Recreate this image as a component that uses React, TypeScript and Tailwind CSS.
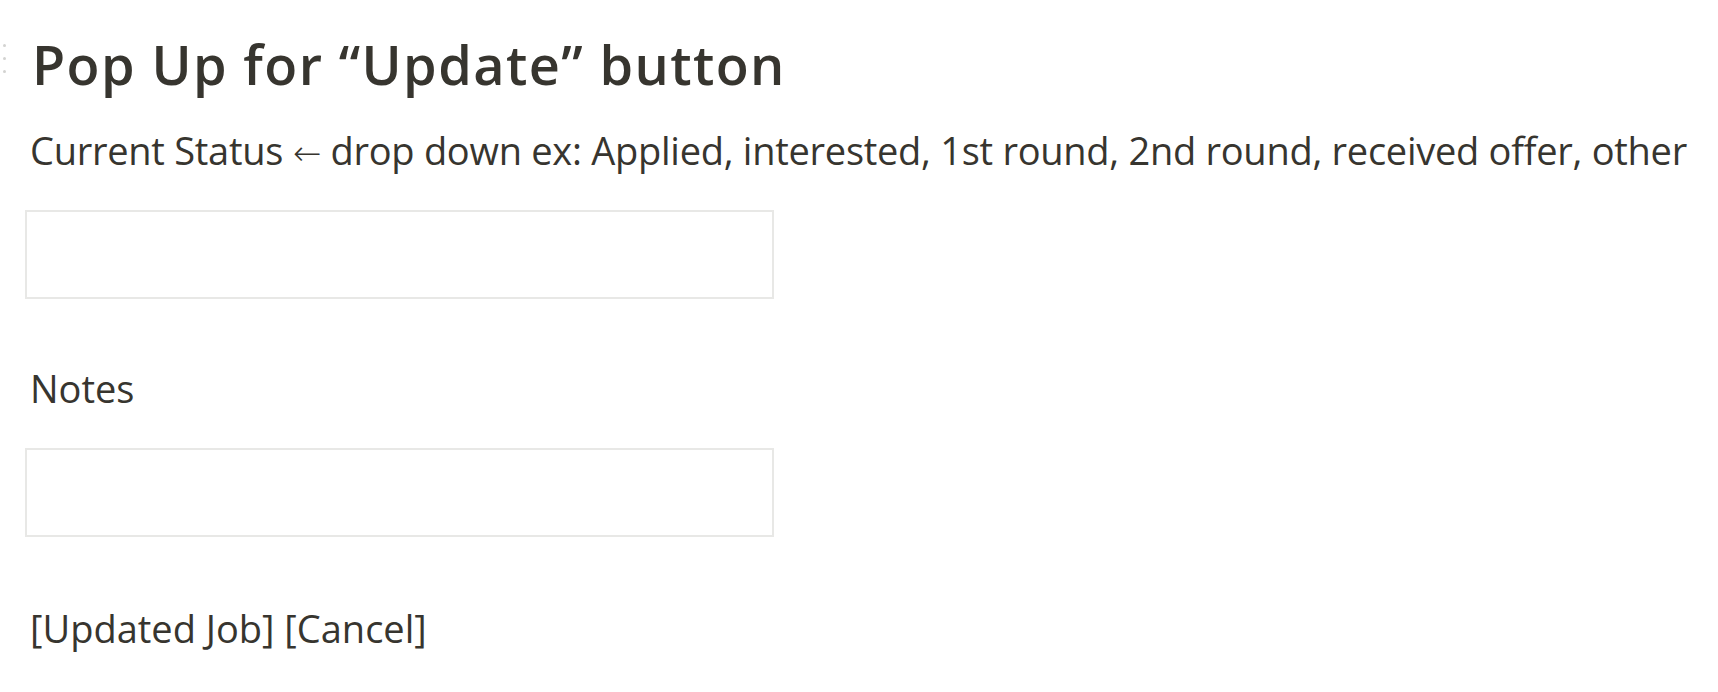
import React from "react";

const font = { fontFamily: '"Open Sans", "Noto Sans", sans-serif' };

const Field: React.FC = () => (
  <div className="h-[89px] w-[749px] border-2 border-[#e8e8e6] bg-white" />
);

export default function App() {
  return (
    <div
      className="relative min-h-[692px] w-full bg-white pl-[25px] text-[#37352f]"
      style={font}
    >
      {/* faint block handle on the left edge */}
      <div className="absolute left-[3px] top-[44px] flex flex-col gap-[10px]">
        <span className="h-[3px] w-[3px] rounded-full bg-[#d3d3d1]" />
        <span className="h-[3px] w-[3px] rounded-full bg-[#d3d3d1]" />
        <span className="h-[3px] w-[3px] rounded-full bg-[#d3d3d1]" />
      </div>

      <div className="pt-[32px]">
        <h1 className="pl-[7px] text-[54px] font-semibold leading-[65px] tracking-[1.4px]">
          Pop Up for “Update” button
        </h1>

        <p className="mt-[25px] h-[57px] pl-[5px] text-[38px] leading-[57px] tracking-[-0.27px] whitespace-nowrap">
          Current Status{" "}
          <span className="font-['DejaVu_Sans'] text-[34px] leading-none font-light">
            ←
          </span>{" "}
          drop down ex: Applied, interested, 1st round, 2nd round, received
          offer, other
        </p>

        <div className="mt-[31px]">
          <Field />
        </div>

        <p className="mt-[61px] pl-[5px] text-[38px] leading-[57px]">Notes</p>

        <div className="mt-[31px]">
          <Field />
        </div>

        <p className="mt-[63px] pl-[5px] text-[38px] leading-[57px]">
          [Updated Job] [Cancel]
        </p>
      </div>
    </div>
  );
}
